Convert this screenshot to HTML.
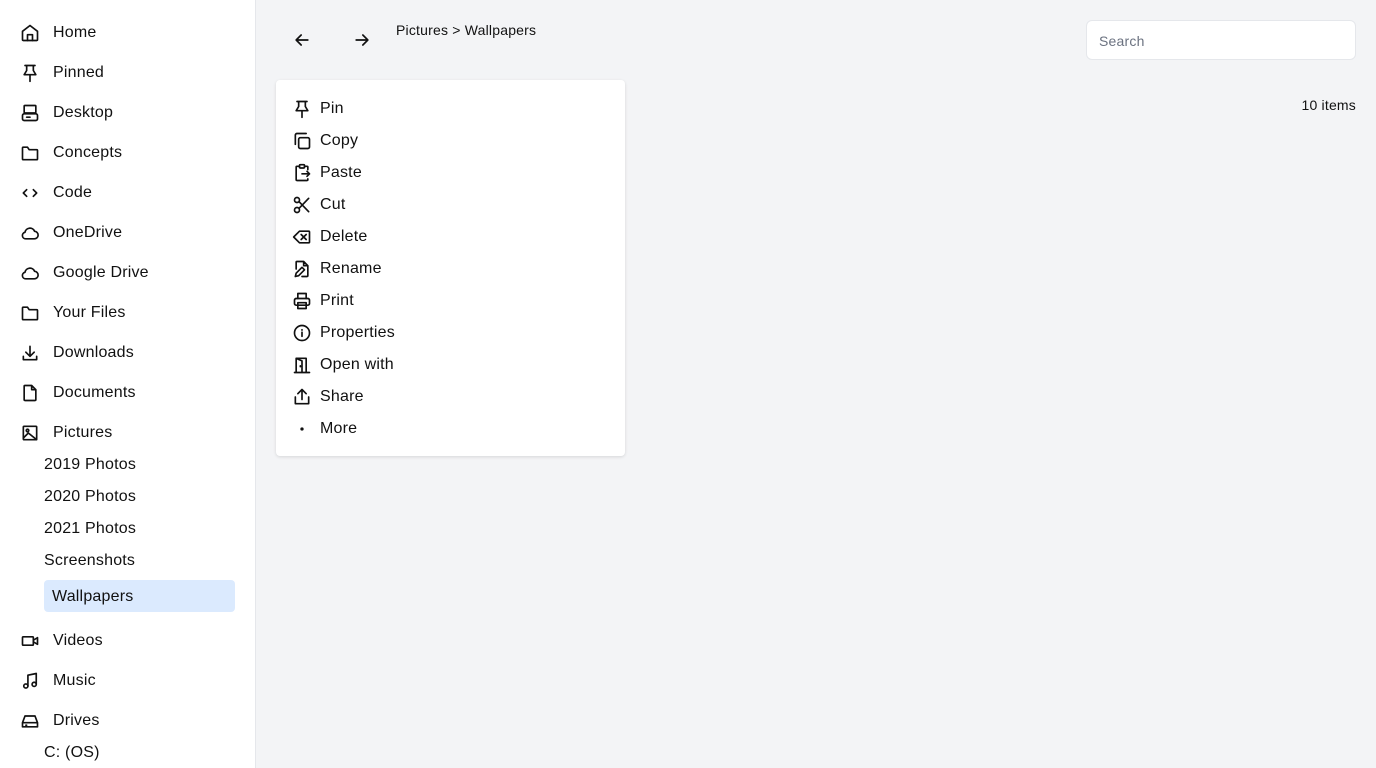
<!DOCTYPE html>
<html><head><meta charset="utf-8"><style>
*{margin:0;padding:0;box-sizing:border-box}
body{width:1376px;height:768px;overflow:hidden;background:#f3f4f6;font-family:"Liberation Sans",sans-serif;color:#111;position:relative;letter-spacing:0.2px}
.side{position:absolute;left:0;top:0;width:256px;height:768px;background:#fff;border-right:1px solid #e5e7eb}
.it{position:absolute;left:20px;height:24px;display:flex;align-items:center;font-size:16px;margin-top:1px}
.it svg{width:20px;height:20px;margin-right:13px;margin-top:-1px;fill:none;stroke:#111;stroke-width:2;stroke-linecap:round;stroke-linejoin:round}
.sub{position:absolute;left:44px;font-size:16px;line-height:20px;margin-top:1px}
.sel{position:absolute;left:44px;top:580px;width:191px;height:32px;background:#dbeafe;border-radius:4px;padding-left:8px;line-height:34px;font-size:16px}
.menu{position:absolute;left:276px;top:80px;width:349px;height:376px;background:#fff;border-radius:4px;box-shadow:0 1px 3px rgba(0,0,0,.12)}
.mi{position:absolute;left:16px;height:24px;display:flex;align-items:center;font-size:16px;margin-top:1px}
.mi svg{width:20px;height:20px;margin-right:8px;margin-top:-1px;fill:none;stroke:#111;stroke-width:2;stroke-linecap:round;stroke-linejoin:round}
</style></head><body>
<div class="side">
<div class="it" style="top:20px"><svg viewBox="0 0 24 24"><path d="M3 10l9-7 9 7v10a1 1 0 0 1-1 1H4a1 1 0 0 1-1-1z"/><path d="M9 21v-7h6v7"/></svg>Home</div>
<div class="it" style="top:60px"><svg viewBox="0 0 24 24"><path d="M6 3h12M8 3v6l-3 5h14l-3-5V3M12 14v8"/></svg>Pinned</div>
<div class="it" style="top:100px"><svg viewBox="0 0 24 24"><rect x="5" y="3" width="14" height="9" rx="1"/><rect x="3" y="13" width="18" height="8" rx="2"/><path d="M8 17h4"/></svg>Desktop</div>
<div class="it" style="top:140px"><svg viewBox="0 0 24 24"><path d="M3 6a1 1 0 0 1 1-1h5l2 3h9a1 1 0 0 1 1 1v10a1 1 0 0 1-1 1H4a1 1 0 0 1-1-1z"/></svg>Concepts</div>
<div class="it" style="top:180px"><svg viewBox="0 0 24 24"><path d="M8 8l-4 4 4 4M16 8l4 4-4 4"/></svg>Code</div>
<div class="it" style="top:220px"><svg viewBox="0 0 24 24"><path d="M7 19a4 4 0 0 1-1-7.9A6 6 0 0 1 17.5 10 4.5 4.5 0 0 1 17 19z"/></svg>OneDrive</div>
<div class="it" style="top:260px"><svg viewBox="0 0 24 24"><path d="M7 19a4 4 0 0 1-1-7.9A6 6 0 0 1 17.5 10 4.5 4.5 0 0 1 17 19z"/></svg>Google Drive</div>
<div class="it" style="top:300px"><svg viewBox="0 0 24 24"><path d="M3 6a1 1 0 0 1 1-1h5l2 3h9a1 1 0 0 1 1 1v10a1 1 0 0 1-1 1H4a1 1 0 0 1-1-1z"/></svg>Your Files</div>
<div class="it" style="top:340px"><svg viewBox="0 0 24 24"><path d="M4 16v4h16v-4M12 4v12M7 11l5 5 5-5"/></svg>Downloads</div>
<div class="it" style="top:380px"><svg viewBox="0 0 24 24"><path d="M6 3h8l5 5v12a1 1 0 0 1-1 1H6a1 1 0 0 1-1-1V4a1 1 0 0 1 1-1zM14 3v5h5"/></svg>Documents</div>
<div class="it" style="top:420px"><svg viewBox="0 0 24 24"><rect x="4" y="4" width="16" height="16" rx="1"/><circle cx="9" cy="9" r="1.5"/><path d="M4 18l6-6 10 8"/></svg>Pictures</div>
<div class="sub" style="top:454px">2019 Photos</div>
<div class="sub" style="top:486px">2020 Photos</div>
<div class="sub" style="top:518px">2021 Photos</div>
<div class="sub" style="top:550px">Screenshots</div>
<div class="sel">Wallpapers</div>
<div class="it" style="top:628px"><svg viewBox="0 0 24 24"><rect x="3" y="7" width="13" height="10" rx="1"/><path d="M16 11l5-3v8l-5-3"/></svg>Videos</div>
<div class="it" style="top:668px"><svg viewBox="0 0 24 24"><circle cx="7" cy="18" r="2.5"/><circle cx="17" cy="16" r="2.5"/><path d="M9.5 18V5l10-2v13"/></svg>Music</div>
<div class="it" style="top:708px"><svg viewBox="0 0 24 24"><path d="M3 14l3-8h12l3 8v5H3zM3 14h18M7 17h1"/></svg>Drives</div>
<div class="sub" style="top:742px">C: (OS)</div>
</div>
<svg style="position:absolute;left:292px;top:30px" width="20" height="20" viewBox="0 0 24 24" fill="none" stroke="#111" stroke-width="2" stroke-linecap="round" stroke-linejoin="round"><path d="M19 12H5M11 6l-6 6 6 6"/></svg>
<svg style="position:absolute;left:352px;top:30px" width="20" height="20" viewBox="0 0 24 24" fill="none" stroke="#111" stroke-width="2" stroke-linecap="round" stroke-linejoin="round"><path d="M5 12h14M13 6l6 6-6 6"/></svg>
<div style="position:absolute;left:396px;top:22px;font-size:14px">Pictures &gt; Wallpapers</div>
<div style="position:absolute;left:1086px;top:20px;width:270px;height:40px;background:#fff;border:1px solid #e5e7eb;border-radius:6px;padding-left:12px;line-height:40px;font-size:14px;color:#6b7280">Search</div>
<div style="position:absolute;right:20px;top:97px;font-size:14px">10 items</div>
<div class="menu">
<div class="mi" style="top:16px"><svg viewBox="0 0 24 24"><path d="M6 3h12M8 3v6l-3 5h14l-3-5V3M12 14v8"/></svg>Pin</div>
<div class="mi" style="top:48px"><svg viewBox="0 0 24 24"><rect x="8" y="8" width="13" height="13" rx="2"/><path d="M4 16V5a2 2 0 0 1 2-2h11"/></svg>Copy</div>
<div class="mi" style="top:80px"><svg viewBox="0 0 24 24"><path d="M9 4H6a1 1 0 0 0-1 1v15a1 1 0 0 0 1 1h12a1 1 0 0 0 1-1v-1M15 4h3a1 1 0 0 1 1 1v3"/><rect x="9" y="2" width="6" height="4" rx="1"/><path d="M12 13h9M18 10l3 3-3 3"/></svg>Paste</div>
<div class="mi" style="top:112px"><svg viewBox="0 0 24 24"><circle cx="6" cy="6" r="3"/><circle cx="6" cy="18" r="3"/><path d="M8.5 8L20 20M8.5 16L20 4"/></svg>Cut</div>
<div class="mi" style="top:144px"><svg viewBox="0 0 24 24"><path d="M9 5h11a1 1 0 0 1 1 1v12a1 1 0 0 1-1 1H9l-7-7z"/><path d="M11 9l6 6M17 9l-6 6"/></svg>Delete</div>
<div class="mi" style="top:176px"><svg viewBox="0 0 24 24"><path d="M5 12V4a1 1 0 0 1 1-1h8l5 5v12a1 1 0 0 1-1 1h-6M14 3v5h5M4 21l1-4 7-7 3 3-7 7z"/></svg>Rename</div>
<div class="mi" style="top:208px"><svg viewBox="0 0 24 24"><path d="M7 9V3h10v6"/><rect x="3" y="9" width="18" height="8" rx="2"/><rect x="7" y="14" width="10" height="7"/></svg>Print</div>
<div class="mi" style="top:240px"><svg viewBox="0 0 24 24"><circle cx="12" cy="12" r="9"/><path d="M12 11v5M12 8v.5"/></svg>Properties</div>
<div class="mi" style="top:272px"><svg viewBox="0 0 24 24"><path d="M3 21h18M5 21V4h12v17M5 4l7 3v14M10 13v1"/></svg>Open with</div>
<div class="mi" style="top:304px"><svg viewBox="0 0 24 24"><path d="M4 12v8h16v-8M12 15V3M7 8l5-5 5 5"/></svg>Share</div>
<div class="mi" style="top:336px"><svg viewBox="0 0 24 24"><circle cx="12" cy="12" r="1" fill="#111"/></svg>More</div>
</div>
</body></html>
